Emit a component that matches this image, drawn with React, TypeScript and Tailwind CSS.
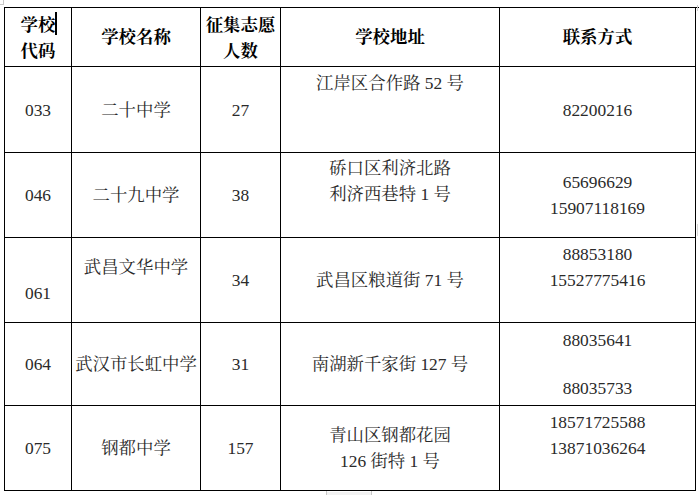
import React from "react";

const font =
  "font-['Liberation_Serif','Noto_Serif_CJK_SC','Noto_Sans_CJK_SC',serif]";

function Cell({
  children,
  top,
  bold,
  leading = "leading-[26px]",
  extra = "",
}: {
  children: React.ReactNode;
  top?: string;
  bold?: boolean;
  leading?: string;
  extra?: string;
}) {
  return (
    <div
      className={`relative flex flex-col items-center border-r border-b border-black text-center ${leading} ${
        top ? `justify-start ${top}` : "justify-center"
      } ${bold ? "font-bold text-black" : "text-[#2a2a2a]"} ${extra}`}
    >
      {children}
    </div>
  );
}

export default function App() {
  return (
    <div className={`relative w-[699px] h-[495px] overflow-hidden bg-white pl-[4px] pt-[7px] text-[17.4px] ${font}`}>
      <div className="grid grid-cols-[67px_129px_80px_219px_196px] grid-rows-[59px_86px_85px_85px_83px_85px] border-l border-t border-black">
        {/* header */}
        <Cell bold top="pt-[4px]">
          <span className="relative">
            学校
            <span className="absolute right-[-2px] top-[0px] h-[23px] w-[2px] bg-black" />
          </span>
          <span>代码</span>
        </Cell>
        <Cell bold>学校名称</Cell>
        <Cell bold top="pt-[4px]">
          <span>征集志愿</span>
          <span>人数</span>
        </Cell>
        <Cell bold>学校地址</Cell>
        <Cell bold>联系方式</Cell>

        {/* 033 */}
        <Cell>033</Cell>
        <Cell>二十中学</Cell>
        <Cell>27</Cell>
        <Cell top="pt-[3px]">江岸区合作路 52 号</Cell>
        <Cell>82200216</Cell>

        {/* 046 */}
        <Cell>046</Cell>
        <Cell>二十九中学</Cell>
        <Cell>38</Cell>
        <Cell top="pt-[2px]">
          <span>硚口区利济北路</span>
          <span>利济西巷特 1 号</span>
        </Cell>
        <Cell>
          <span>65696629</span>
          <span>15907118169</span>
        </Cell>

        {/* 061 */}
        <Cell top="pt-[42px]">061</Cell>
        <Cell top="pt-[16px]">武昌文华中学</Cell>
        <Cell>34</Cell>
        <Cell>武昌区粮道街 71 号</Cell>
        <Cell top="pt-[3px]">
          <span>88853180</span>
          <span>15527775416</span>
        </Cell>

        {/* 064 */}
        <Cell>064</Cell>
        <Cell>武汉市长虹中学</Cell>
        <Cell>31</Cell>
        <Cell>南湖新千家街 127 号</Cell>
        <Cell top="pt-[5px]" leading="leading-[24px]">
          <span>88035641</span>
          <span>&nbsp;</span>
          <span>88035733</span>
        </Cell>

        {/* 075 */}
        <Cell>075</Cell>
        <Cell>钢都中学</Cell>
        <Cell>157</Cell>
        <Cell>
          <span>青山区钢都花园</span>
          <span>126 街特 1 号</span>
        </Cell>
        <Cell top="pt-[3px]">
          <span>18571725588</span>
          <span>13871036264</span>
        </Cell>
      </div>

      {/* page-edge marks */}
      <div className="absolute left-0 top-0 h-[5px] w-[4px] border-r border-b border-[#c8c8c8]" />
      <div className="absolute right-[1px] top-[5px] h-[6px] w-px bg-[#d0d0d0]" />
      <div className="absolute right-[1px] top-[224px] h-[12px] w-px bg-[#d8d8d8]" />
      <div className="absolute left-[326px] top-[491px] h-[4px] w-px bg-[#c8c8c8]" />
      <div className="absolute left-[327px] top-[492px] h-[3px] w-[44px] bg-[#f2f2f2]" />
      <div className="absolute left-[371px] top-[491px] h-[4px] w-px bg-[#c8c8c8]" />
    </div>
  );
}
